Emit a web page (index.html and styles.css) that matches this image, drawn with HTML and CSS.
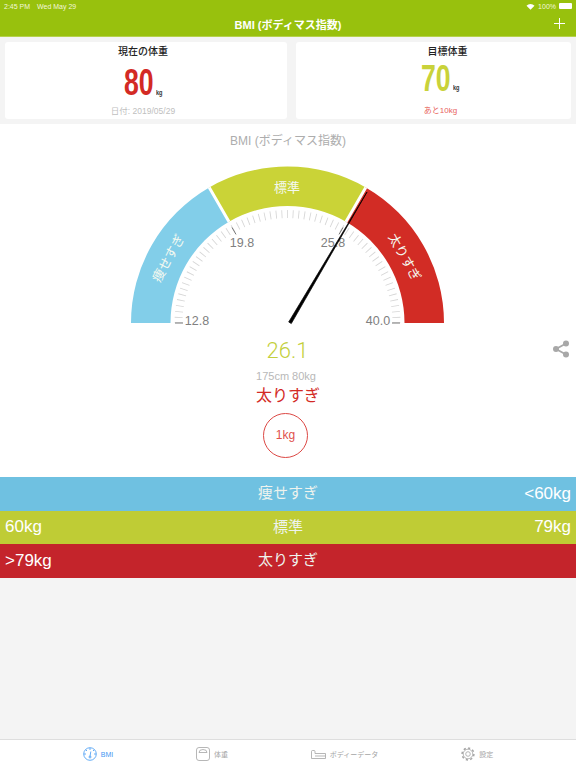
FILE: index.html
```html
<!DOCTYPE html>
<html lang="ja">
<head>
    <meta charset="UTF-8">
    <meta name="viewport" content="width=device-width, initial-scale=1.0">
    <title>BMI</title>
    <link rel="stylesheet" href="styles.css">
</head>
<body>

    <!-- Header -->
    <header class="header">
        <div class="statusbar">
            <span class="status-time">2:45 PM</span>
            <span>Wed May 29</span>
            <span class="status-right">
                <svg class="wifi" viewBox="0 0 10 8"><path d="M5 7.6 L0.4 3 A6.5 6.5 0 0 1 9.6 3 Z"/></svg>
                100%
                <span class="battery"></span>
            </span>
        </div>
        <div class="navbar">
            <h1 class="nav-title">BMI (ボディマス指数)</h1>
            <svg class="nav-add" viewBox="0 0 12 12"><path d="M6 0V12M0 6H12"/></svg>
        </div>
    </header>

    <!-- Weight cards -->
    <section class="cards">
        <div class="card card-now">
            <h2 class="card-title">現在の体重</h2>
            <div class="weight weight-now">
                <span class="weight-num">80</span><span class="weight-unit">kg</span>
            </div>
            <p class="card-note">日付: 2019/05/29</p>
        </div>
        <div class="card card-goal">
            <h2 class="card-title">目標体重</h2>
            <div class="weight weight-goal">
                <span class="weight-num">70</span><span class="weight-unit">kg</span>
            </div>
            <p class="card-note card-note-red">あと10kg</p>
        </div>
    </section>

    <!-- Gauge -->
    <section class="gauge-panel">
        <h2 class="gauge-title">BMI (ボディマス指数)</h2>
        <svg class="gauge" viewBox="128 150 320 180">
            <path class="arc-blue" d="M131 323A156.500 156.500 0 0 1 209.250 187.500L229 221.700A117 117 0 0 0 170.500 323Z"/>
            <path class="arc-green" d="M209.250 187.500A156.500 156.500 0 0 1 365.750 187.500L346 221.700A117 117 0 0 0 229 221.700Z"/>
            <path class="arc-red" d="M365.750 187.500A156.500 156.500 0 0 1 444 323H404.500A117 117 0 0 0 346 221.700Z"/>
            <path class="arc-gap" d="M209.250 187.500L229 221.700M365.750 187.500L346 221.700"/>

            <path class="ticks" pathLength="180" d="M178.500 323A109 109 0 0 1 396.500 323"/>
            <path class="ticks-major" d="M175 323H183M392 323H400M232 227.500L236 234.400M343 227.500L339 234.400"/>

            <text class="arc-label" x="287" y="192">標準</text>
            <text class="arc-label" transform="translate(168 258) rotate(-61)" y="5">痩せすぎ</text>
            <text class="arc-label" transform="translate(405 257) rotate(61)" y="5">太りすぎ</text>

            <text class="scale-label" x="197" y="325">12.8</text>
            <text class="scale-label" x="242" y="247">19.8</text>
            <text class="scale-label" x="333" y="247">25.8</text>
            <text class="scale-label" x="378" y="325">40.0</text>

            <path class="needle" d="M288.700 322L291.300 323.600L367 192Z"/>
        </svg>

        <p class="bmi-value">26.1</p>
        <p class="bmi-body">175cm 80kg</p>
        <p class="bmi-status">太りすぎ</p>
        <div class="bmi-diff">1kg</div>

        <svg class="share" viewBox="0 0 18 18">
            <path d="M14 3.500L4 9L14 14.500"/>
            <circle cx="14" cy="3.500" r="3"/>
            <circle cx="4" cy="9" r="3"/>
            <circle cx="14" cy="14.500" r="3"/>
        </svg>
    </section>

    <!-- Ranges -->
    <section class="ranges">
        <div class="range range-blue">
            <span class="range-left"></span>
            <span class="range-name">痩せすぎ</span>
            <span class="range-right">&lt;60kg</span>
        </div>
        <div class="range range-green">
            <span class="range-left">60kg</span>
            <span class="range-name">標準</span>
            <span class="range-right">79kg</span>
        </div>
        <div class="range range-red">
            <span class="range-left">&gt;79kg</span>
            <span class="range-name">太りすぎ</span>
            <span class="range-right"></span>
        </div>
    </section>

    <div class="spacer"></div>

    <!-- Tab bar -->
    <nav class="tabbar">
        <div class="tab tab-active">
            <svg class="tab-icon" viewBox="0 0 14 14">
                <circle cx="7" cy="7" r="6.300"/>
                <path d="M7 1V3M1 7H3M11 7H13M2.800 2.800L4 4M11.200 2.800L10 4M7.800 4.500L7 9.500"/>
                <circle cx="7" cy="10" r="1"/>
            </svg>
            BMI
        </div>
        <div class="tab">
            <svg class="tab-icon" viewBox="0 0 14 14">
                <rect x="0.500" y="0.500" width="13" height="13" rx="2.500"/>
                <path d="M3 5.500A4 3 0 0 1 11 5.500Z"/>
            </svg>
            体重
        </div>
        <div class="tab">
            <svg class="tab-body" viewBox="0 0 15 9">
                <path d="M0.500 8.500V1.500A1 1 0 0 1 1.500 .5H3A1 1 0 0 1 4 1.500V3.500H14.500V8.500Z"/>
                <path d="M4 6H14.500"/>
            </svg>
            ボディーデータ
        </div>
        <div class="tab">
            <svg class="tab-icon" viewBox="0 0 14 14">
                <circle cx="7" cy="7" r="4.800"/>
                <circle class="gear-teeth" cx="7" cy="7" r="5.900" pathLength="32"/>
                <circle cx="7" cy="7" r="2.300"/>
            </svg>
            設定
        </div>
    </nav>

</body>
</html>
```

FILE: styles.css
```css
* {
    box-sizing: border-box;
}

body {
    margin: 0;
    height: 768px;
    display: flex;
    flex-direction: column;
    overflow: hidden;
    background-color: #f4f4f4;
    font-family: "Liberation Sans", "Noto Sans CJK JP", sans-serif;
}

h1, h2, p {
    margin: 0;
}

/* Header */
.header {
    height: 37px;
    background-color: #98c10d;
    border-bottom: 1px solid #b5d24c;
    color: white;
}

.statusbar {
    height: 12px;
    padding: 0 4px;
    display: flex;
    align-items: center;
    font-size: 7px;
    color: #f2f7dc;
}

.status-time {
    margin-right: 7px;
}

.status-right {
    margin-left: auto;
    display: flex;
    align-items: center;
    gap: 3px;
}

.wifi {
    width: 9px;
    height: 7px;
    fill: white;
}

.battery {
    width: 13px;
    height: 6px;
    background-color: white;
    border-radius: 1px;
}

.navbar {
    height: 24px;
    position: relative;
    display: flex;
    align-items: center;
    justify-content: center;
}

.nav-title {
    font-size: 11px;
    font-weight: bold;
}

.nav-add {
    position: absolute;
    right: 11px;
    top: 6px;
    width: 11px;
    height: 11px;
    stroke: white;
    stroke-width: 1.100;
}

/* Weight cards */
.cards {
    display: flex;
    gap: 9px;
    padding: 5px;
}

.card {
    height: 77px;
    background: white;
    border-radius: 3px;
    padding-top: 3px;
    text-align: center;
}

.card-now {
    width: 282px;
}

.card-goal {
    width: 275px;
}

.card-title {
    font-size: 10px;
    line-height: 14px;
    font-weight: 500;
    color: #222;
}

.card-now .card-title,
.card-now .card-note {
    margin-right: 6px;
}

.card-goal .card-title {
    margin-left: 28px;
}

.card-goal .card-note {
    margin-left: 14px;
}

.weight {
    height: 40px;
    display: flex;
    justify-content: center;
    white-space: nowrap;
}

.weight-num {
    display: inline-block;
    width: 32px;
    font-size: 36px;
    line-height: 40px;
    font-weight: bold;
    text-align: left;
    transform: scaleX(0.74);
    transform-origin: left;
}

.weight-unit {
    width: 9px;
    font-size: 8px;
    font-weight: bold;
    color: #333;
    transform: scaleX(0.7);
    transform-origin: left;
}

.weight-now {
    padding-top: 4px;
    padding-right: 4px;
    color: #d32a25;
}

.weight-now .weight-unit {
    padding-top: 25px;
}

.weight-goal {
    padding-left: 16px;
    color: #c9d23a;
}

.weight-goal .weight-unit {
    padding-top: 24px;
}

.card-note {
    margin-top: 6px;
    font-size: 8.500px;
    line-height: 12px;
    color: #c0c0c0;
}

.card-note-red {
    font-size: 8px;
    color: #e8625d;
}

/* Gauge */
.gauge-panel {
    height: 353px;
    position: relative;
    background: white;
    text-align: center;
}

.gauge-title {
    padding-top: 8px;
    height: 26px;
    font-size: 12px;
    line-height: 18px;
    font-weight: normal;
    color: #adadad;
}

.gauge {
    display: block;
    width: 320px;
    height: 180px;
    margin: 0 auto;
}

.arc-blue {
    fill: #82cee9;
}

.arc-green {
    fill: #cad337;
}

.arc-red {
    fill: #d22c25;
}

.arc-gap {
    stroke: white;
    stroke-width: 3;
}

.ticks {
    fill: none;
    stroke: #d6d6d6;
    stroke-width: 8;
    stroke-dasharray: 0.450 2.550;
    stroke-dashoffset: 0.225;
}

.ticks-major {
    stroke: #777;
    stroke-width: 1;
}

.arc-label {
    font-size: 13px;
    fill: #f4f9f0;
    text-anchor: middle;
}

.scale-label {
    font-size: 12.500px;
    fill: #808080;
    text-anchor: middle;
}

.needle {
    fill: black;
    stroke: black;
    stroke-width: 0.700;
    stroke-linejoin: round;
}

.bmi-value {
    margin-top: 6px;
    margin-right: 1px;
    font-family: Roboto, sans-serif;
    font-weight: 300;
    font-size: 22px;
    line-height: 30px;
    color: #c3cf3c;
}

.bmi-body {
    margin-top: 2px;
    margin-right: 4px;
    font-size: 11px;
    line-height: 16px;
    color: #b8b8b8;
}

.bmi-status {
    margin-top: 1px;
    font-size: 16px;
    line-height: 22px;
    color: #d32a25;
}

.bmi-diff {
    width: 45px;
    height: 45px;
    margin: 6px 0 0 263px;
    border: 1.500px solid #dc4844;
    border-radius: 50%;
    font-size: 12px;
    line-height: 42px;
    color: #e0514c;
}

.share {
    position: absolute;
    right: 6px;
    top: 216px;
    width: 18px;
    height: 18px;
    fill: #a8a8a8;
    stroke: #a8a8a8;
    stroke-width: 0;
}

.share path {
    fill: none;
    stroke-width: 1.800;
}

/* Ranges */
.range {
    height: 33.500px;
    padding: 0 5px;
    display: grid;
    grid-template-columns: 1fr auto 1fr;
    align-items: center;
    color: white;
    font-size: 17px;
}

.range-name {
    font-size: 15px;
    line-height: 20px;
    margin-top: -1px;
    color: #eef3ee;
}

.range-right {
    text-align: right;
}

.range-blue {
    background-color: #6fc1e1;
}

.range-green {
    background-color: #bfcc35;
}

.range-red {
    background-color: #c4242b;
}

.spacer {
    flex: 1;
}

/* Tab bar */
.tabbar {
    height: 29px;
    background: white;
    border-top: 1px solid #dedede;
    display: flex;
    justify-content: space-evenly;
    align-items: center;
}

.tab {
    display: flex;
    align-items: center;
    gap: 4px;
    font-size: 7px;
    color: #a5a5a5;
}

.tab svg {
    fill: none;
    stroke: #a5a5a5;
    stroke-width: 0.800;
}

.tab-icon {
    width: 14px;
    height: 14px;
}

.tab-body {
    width: 15px;
    height: 9px;
}

.gear-teeth {
    stroke-width: 1.500;
    stroke-dasharray: 2 2;
}

.tab-active {
    color: #3f98f2;
}

.tab-active svg {
    stroke: #3f98f2;
}
```
